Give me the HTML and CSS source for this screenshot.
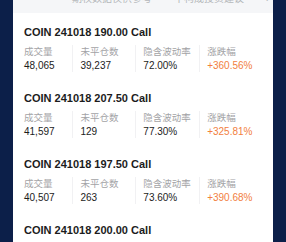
FILE: index.html
```html
<!DOCTYPE html>
<html lang="zh-CN">
<head>
<meta charset="UTF-8" />
<meta name="viewport" content="width=device-width, initial-scale=1" />
<title>期权列表</title>
<link rel="stylesheet" href="styles.css">
</head>
<body>

<div class="panel">
  <div class="notice"><span>期权数据仅供参考</span><span>不构成投资建议</span><span>›</span></div>

  <div class="item">
    <div class="title">COIN 241018 190.00 Call</div>
    <div class="stats">
      <div class="stat"><div class="label">成交量</div><div class="value">48,065</div></div>
      <div class="stat"><div class="label">未平仓数</div><div class="value">39,237</div></div>
      <div class="stat"><div class="label">隐含波动率</div><div class="value">72.00%</div></div>
      <div class="stat"><div class="label">涨跌幅</div><div class="value up">+360.56%</div></div>
    </div>
  </div>

  <div class="item">
    <div class="title">COIN 241018 207.50 Call</div>
    <div class="stats">
      <div class="stat"><div class="label">成交量</div><div class="value">41,597</div></div>
      <div class="stat"><div class="label">未平仓数</div><div class="value">129</div></div>
      <div class="stat"><div class="label">隐含波动率</div><div class="value">77.30%</div></div>
      <div class="stat"><div class="label">涨跌幅</div><div class="value up">+325.81%</div></div>
    </div>
  </div>

  <div class="item">
    <div class="title">COIN 241018 197.50 Call</div>
    <div class="stats">
      <div class="stat"><div class="label">成交量</div><div class="value">40,507</div></div>
      <div class="stat"><div class="label">未平仓数</div><div class="value">263</div></div>
      <div class="stat"><div class="label">隐含波动率</div><div class="value">73.60%</div></div>
      <div class="stat"><div class="label">涨跌幅</div><div class="value up">+390.68%</div></div>
    </div>
  </div>

  <div class="item">
    <div class="title">COIN 241018 200.00 Call</div>
  </div>
</div>

</body>
</html>
```

FILE: styles.css
```css
html, body {
  margin: 0; padding: 0;
  height: 100%;
  overflow: hidden;
}
body {
  background: #0c1f49;
  font-family: 'Liberation Sans', 'Noto Sans CJK SC', sans-serif;
  color: #1c1c1c;
}
.panel {
  margin: 0 13px;
  background: #ffffff;
  min-height: 100%;
}
.notice {
  height: 13px;
  overflow: hidden;
  background: #f5f6f8;
  font-size: 10px;
  line-height: 13px;
  color: #b4b6ba;
  padding-left: 59px;
  display: flex;
  gap: 22px;
  white-space: nowrap;
}
.notice span {
  margin-top: -8px;
  flex-shrink: 0;
}
.item {
  padding: 12px 11px 7px;
}
.title {
  font-size: 11px;
  font-weight: 700;
  line-height: 14px;
  white-space: nowrap;
}
.stats {
  display: flex;
  margin-top: 6px;
}
.stat {
  width: 60px;
  padding-left: 7px;
  border-left: 1px solid #f1f1f3;
}
.stat:first-child {
  width: 53px;
  padding-left: 0;
  border-left: none;
}
.stat:nth-child(3) {
  width: 61px;
}
.label {
  font-size: 9.5px;
  line-height: 13px;
  color: #a3a3a6;
  white-space: nowrap;
}
.value {
  font-size: 10px;
  line-height: 13px;
  margin-top: 1px;
  color: #1c1c1c;
  white-space: nowrap;
}
.value.up {
  color: #f2803e;
}
```
